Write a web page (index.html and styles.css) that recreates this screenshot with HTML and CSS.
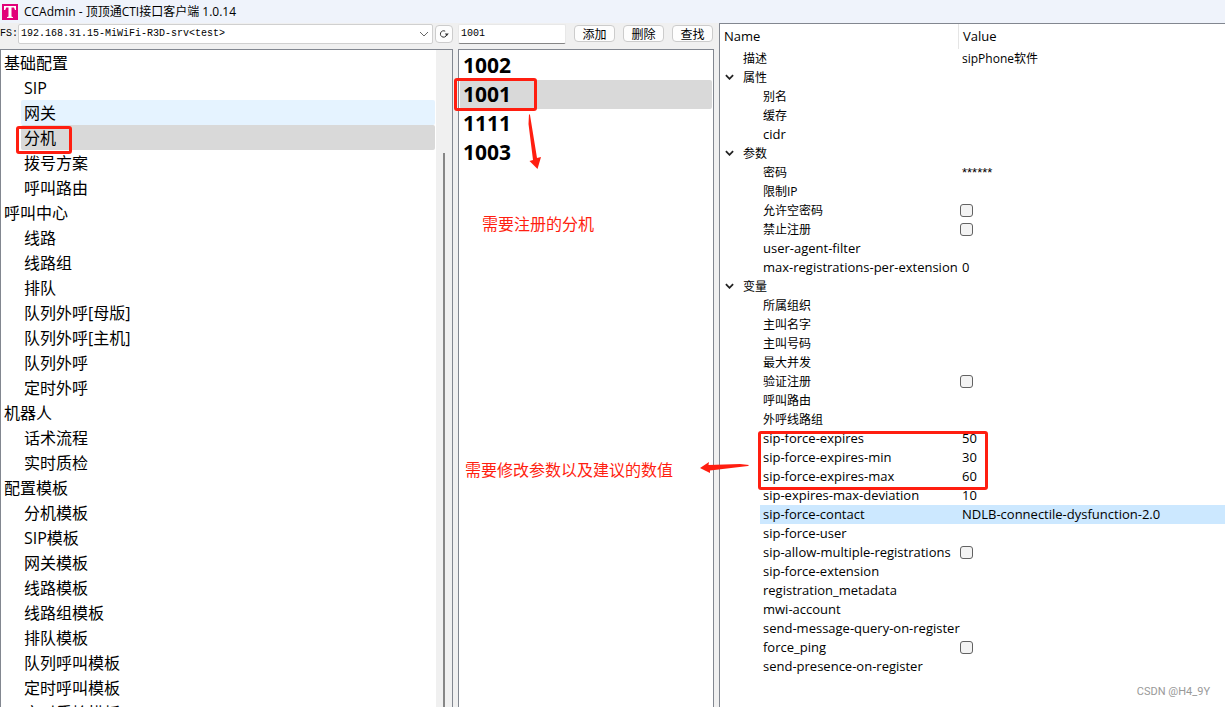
FILE: index.html
```html
<!DOCTYPE html>
<html lang="zh-CN">
<head>
<meta charset="utf-8">
<title>CCAdmin - 顶顶通CTI接口客户端 1.0.14</title>
<link rel="stylesheet" href="styles.css">
</head>
<body>
<header class="titlebar">
  <svg class="logo" viewBox="0 0 16 16" aria-hidden="true"><rect width="16" height="16" fill="#e2007a"/><path d="M2 2h12v4h-1l-1-2.500H9.500v9l1.500.7v.8H5v-.8l1.500-.7v-9H4.200L3.200 6H2z" fill="#fff"/></svg>
  <h1 class="title">CCAdmin - 顶顶通CTI接口客户端 1.0.14</h1>
</header>
<main class="workspace">
  <section class="column">
    <form class="toolbar server-bar">
      <label class="fs-label" for="server">FS:</label>
      <div class="combo">
        <select id="server" class="combo-select"><option>192.168.31.15-MiWiFi-R3D-srv&lt;test&gt;</option></select>
        <svg class="combo-arrow" viewBox="0 0 10 6" aria-hidden="true"><path d="M1 1l4 4 4-4" fill="none" stroke="#666"/></svg>
      </div>
      <button class="refresh" type="button" aria-label="刷新"><svg viewBox="0 0 10 10" aria-hidden="true"><path d="M7.800 5A3.200 3.200 0 1 1 6.200 2.200M7.800 5A3.200 3.200 0 0 1 6 7.800" fill="none" stroke="#333"/><path d="M5.800 4.600h4L7.800 7z" fill="#333"/></svg></button>
    </form>
    <div class="pane nav-pane">
      <nav class="tree">
        <a class="node group" href="#">基础配置</a>
        <a class="node" href="#">SIP</a>
        <a class="node hover" href="#">网关</a>
        <a class="node selected" href="#">分机</a>
        <a class="node" href="#">拨号方案</a>
        <a class="node" href="#">呼叫路由</a>
        <a class="node group" href="#">呼叫中心</a>
        <a class="node" href="#">线路</a>
        <a class="node" href="#">线路组</a>
        <a class="node" href="#">排队</a>
        <a class="node" href="#">队列外呼[母版]</a>
        <a class="node" href="#">队列外呼[主机]</a>
        <a class="node" href="#">队列外呼</a>
        <a class="node" href="#">定时外呼</a>
        <a class="node group" href="#">机器人</a>
        <a class="node" href="#">话术流程</a>
        <a class="node" href="#">实时质检</a>
        <a class="node group" href="#">配置模板</a>
        <a class="node" href="#">分机模板</a>
        <a class="node" href="#">SIP模板</a>
        <a class="node" href="#">网关模板</a>
        <a class="node" href="#">线路模板</a>
        <a class="node" href="#">线路组模板</a>
        <a class="node" href="#">排队模板</a>
        <a class="node" href="#">队列呼叫模板</a>
        <a class="node" href="#">定时呼叫模板</a>
        <a class="node" href="#">实时质检模板</a>
      </nav>
      <div class="scrollbar"><div class="thumb"></div></div>
      <div class="mark mark-nav"></div>
    </div>
  </section>
  <section class="column">
    <form class="toolbar search-bar">
      <input class="search" type="text" value="1001" aria-label="分机号">
      <button class="action" type="button">添加</button>
      <button class="action" type="button">删除</button>
      <button class="action" type="button">查找</button>
    </form>
    <div class="pane list-pane">
      <ul class="extensions">
        <li class="extension">1002</li>
        <li class="extension selected">1001</li>
        <li class="extension">1111</li>
        <li class="extension">1003</li>
      </ul>
      <div class="mark mark-list"></div>
      <svg class="arrow-down" viewBox="0 0 14 56" aria-hidden="true"><path d="M1 0L2 1 9 44 13 43 9.500 55 1.500 47 5 46 .5 10z" fill="#ff1e10"/></svg>
      <p class="note note-ext">需要注册的分机</p>
      <p class="note note-params">需要修改参数以及建议的数值</p>
    </div>
  </section>
  <section class="pane props-pane">
    <table class="props">
      <thead><tr><th class="name-col">Name</th><th class="value-col">Value</th></tr></thead>
      <tbody>
        <tr class="top"><td>描述</td><td>sipPhone软件</td></tr>
        <tr class="top"><td><svg class="chevron" viewBox="0 0 10 6" aria-hidden="true"><path d="M1 1l4 4 4-4"/></svg>属性</td><td></td></tr>
        <tr><td>别名</td><td></td></tr>
        <tr><td>缓存</td><td></td></tr>
        <tr class="latin"><td>cidr</td><td></td></tr>
        <tr class="top"><td><svg class="chevron" viewBox="0 0 10 6" aria-hidden="true"><path d="M1 1l4 4 4-4"/></svg>参数</td><td></td></tr>
        <tr><td>密码</td><td class="secret">******</td></tr>
        <tr><td>限制IP</td><td></td></tr>
        <tr><td><label for="c1">允许空密码</label></td><td><input id="c1" class="check" type="checkbox"></td></tr>
        <tr><td><label for="c2">禁止注册</label></td><td><input id="c2" class="check" type="checkbox"></td></tr>
        <tr class="latin"><td>user-agent-filter</td><td></td></tr>
        <tr class="latin"><td>max-registrations-per-extension</td><td>0</td></tr>
        <tr class="top"><td><svg class="chevron" viewBox="0 0 10 6" aria-hidden="true"><path d="M1 1l4 4 4-4"/></svg>变量</td><td></td></tr>
        <tr><td>所属组织</td><td></td></tr>
        <tr><td>主叫名字</td><td></td></tr>
        <tr><td>主叫号码</td><td></td></tr>
        <tr><td>最大并发</td><td></td></tr>
        <tr><td><label for="c3">验证注册</label></td><td><input id="c3" class="check" type="checkbox"></td></tr>
        <tr><td>呼叫路由</td><td></td></tr>
        <tr><td>外呼线路组</td><td></td></tr>
        <tr class="latin"><td>sip-force-expires</td><td>50</td></tr>
        <tr class="latin"><td>sip-force-expires-min</td><td>30</td></tr>
        <tr class="latin"><td>sip-force-expires-max</td><td>60</td></tr>
        <tr class="latin"><td>sip-expires-max-deviation</td><td>10</td></tr>
        <tr class="latin active"><td>sip-force-contact</td><td>NDLB-connectile-dysfunction-2.0</td></tr>
        <tr class="latin"><td>sip-force-user</td><td></td></tr>
        <tr class="latin"><td><label for="c4">sip-allow-multiple-registrations</label></td><td><input id="c4" class="check" type="checkbox"></td></tr>
        <tr class="latin"><td>sip-force-extension</td><td></td></tr>
        <tr class="latin"><td>registration_metadata</td><td></td></tr>
        <tr class="latin"><td>mwi-account</td><td></td></tr>
        <tr class="latin"><td>send-message-query-on-register</td><td></td></tr>
        <tr class="latin"><td><label for="c5">force_ping</label></td><td><input id="c5" class="check" type="checkbox"></td></tr>
        <tr class="latin"><td>send-presence-on-register</td><td></td></tr>
      </tbody>
    </table>
    <div class="mark mark-props"></div>
    <svg class="arrow-left" viewBox="0 0 50 14" aria-hidden="true"><path d="M49 4L48 5 10 9.500 10 12 0 7 9 1 8.500 4 40 3z" fill="#ff1e10"/></svg>
    <span class="watermark">CSDN @H4_9Y</span>
  </section>
</main>
</body>
</html>
```

FILE: styles.css
```css
* { box-sizing: border-box; }
body {
  margin: 0;
  height: 100vh;
  display: flex;
  flex-direction: column;
  overflow: hidden;
  background: #f0f0f0;
  color: #000;
  font: 12px/19px "Open Sans", "Noto Sans CJK SC", sans-serif;
}
.titlebar {
  display: flex;
  align-items: center;
  gap: 6px;
  height: 23px;
  padding: 0 2px;
  background: #eff3fb;
}
.logo { width: 16px; height: 16px; }
.title { margin: 0; font: 12px/22px "Open Sans", "Noto Sans CJK SC", sans-serif; }
.workspace {
  flex: 1;
  min-height: 0;
  display: grid;
  grid-template-columns: minmax(0, 453fr) minmax(0, 256fr) minmax(0, 506fr);
  gap: 5px;
}
.column { display: flex; flex-direction: column; min-height: 0; }
.toolbar { display: flex; align-items: center; height: 26px; padding-bottom: 5px; flex: none; }
.server-bar { gap: 2px; }
.fs-label { font: 10px/20px "Liberation Mono", monospace; width: 16px; }
.combo { flex: 1; position: relative; height: 20px; display: flex; }
.combo-select {
  flex: 1;
  appearance: none;
  height: 20px;
  margin: 0;
  padding: 0 20px 0 2px;
  border: 1px solid #d0d0d0;
  border-radius: 2px;
  background: #fff;
  color: #000;
  font: 10px "Liberation Mono", monospace;
}
.combo-arrow { position: absolute; right: 4px; top: 7px; width: 10px; height: 6px; }
.refresh {
  width: 18px;
  height: 18px;
  padding: 0;
  display: flex;
  align-items: center;
  justify-content: center;
  border: 1px solid #ccc;
  border-radius: 4px;
  background: #fdfdfd;
}
.refresh svg { width: 10px; height: 10px; }
.search-bar { gap: 8px; }
.search {
  flex: 1;
  min-width: 0;
  height: 20px;
  padding: 0 2px;
  border: 1px solid #e8e8e8;
  border-bottom-color: #868686;
  border-radius: 2px;
  background: #fff;
  font: 10px "Liberation Mono", monospace;
}
.action {
  width: 41px;
  height: 17px;
  padding: 0;
  border: 1px solid #ccc;
  border-radius: 4px;
  background: #fdfdfd;
  color: #000;
  font: 12px/14px "Noto Sans CJK SC", sans-serif;
}
.search-bar .action:last-child { margin-right: 1px; }
.pane { position: relative; border: 1px solid #828790; border-bottom: 0; background: #fff; }
.nav-pane, .list-pane { flex: 1; min-height: 0; }
.nav-pane { display: flex; }
.tree { flex: 1; overflow: hidden; padding-right: 1px; }
.node {
  display: block;
  height: 25px;
  margin-left: 20px;
  padding-left: 3px;
  border-radius: 2px;
  color: #000;
  font: 16px/26px "Open Sans", "Noto Sans CJK SC", sans-serif;
  text-decoration: none;
}
.node.group { margin-left: 0; }
.node.hover { background: #e5f3ff; }
.selected, .node.selected { background: #d9d9d9; }
.scrollbar { width: 16px; padding: 103px 6px 0 7px; background: #f0f0f0; }
.thumb { width: 2px; height: 100%; background: #868686; }
.extensions { margin: 0; padding: 1px 1px 0; list-style: none; }
.extension {
  height: 29px;
  padding-left: 3px;
  border-radius: 2px;
  font: 700 21px/28px "Open Sans", sans-serif;
}
.props-pane { border-right: 0; overflow: visible; min-height: 0; }
.props { width: 100%; border-collapse: collapse; table-layout: fixed; }
.props th { height: 25px; padding: 0 4px; text-align: left; font: 13px/19px "Open Sans", sans-serif; }
.name-col { width: 239px; box-shadow: inset -1px 0 #e5e5e5; }
.props td { position: relative; height: 19px; padding: 0 0 0 43px; line-height: 19px; white-space: nowrap; }
.props td:last-child { padding-left: 3px; }
.props .top td:first-child { padding-left: 23px; }
.props .latin { font-size: 13px; }
.props .secret { font-family: "Liberation Sans", sans-serif; font-size: 13px; }
.active { background: linear-gradient(90deg, transparent 40px, #cce8ff 40px); }
.chevron { position: absolute; left: 5px; top: 6px; width: 9px; height: 6px; }
.chevron path { fill: none; stroke: #222; stroke-width: 2; }
.check {
  appearance: none;
  display: block;
  width: 13px;
  height: 13px;
  margin: 0 0 0 -2px;
  border: 1px solid #626262;
  border-radius: 3px;
  background: #f3f3f3;
}
.mark { position: absolute; border: 3px solid #ff1e10; border-radius: 3px; pointer-events: none; }
.mark-nav { left: 15px; top: 76px; width: 56px; height: 28px; }
.mark-list { left: -5px; top: 28px; width: 83px; height: 33px; }
.mark-props { left: 38px; top: 407px; width: 230px; height: 59px; }
.arrow-down { position: absolute; left: 69px; top: 64px; width: 14px; height: 56px; }
.arrow-left { position: absolute; left: -20px; top: 437px; width: 50px; height: 14px; }
.note { position: absolute; margin: 0; color: #ff1e10; font: 16px/24px "Noto Sans CJK SC", sans-serif; white-space: nowrap; }
.note-ext { left: 23px; top: 161px; }
.note-params { left: 6px; top: 407px; }
.watermark { position: absolute; right: 15px; bottom: 6px; color: #999; font: 11px/18px Roboto, sans-serif; }
```
